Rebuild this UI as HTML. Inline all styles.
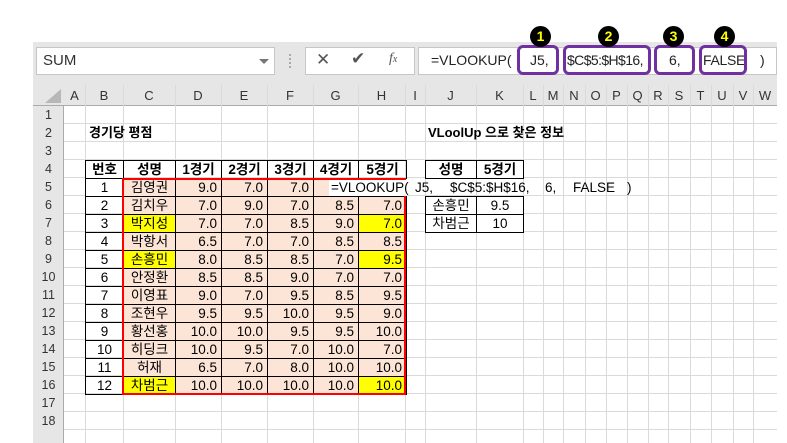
<!DOCTYPE html>
<html><head><meta charset="utf-8"><style>
*{margin:0;padding:0;box-sizing:border-box}
body{width:787px;height:443px;overflow:hidden;background:#fff;position:relative;font-family:"Liberation Sans","Noto Sans CJK KR",sans-serif;color:#000}
.a{position:absolute}
.vl{position:absolute;top:85px;height:358px;width:1px;background:#dadada}
.ch{position:absolute;top:85px;height:21px;font-size:13px;color:#333;text-align:center;line-height:21px}
.rh{position:absolute;left:33px;width:31px;height:18px;font-size:12.5px;color:#333;text-align:center;line-height:18px}
table{border-collapse:collapse;table-layout:fixed;position:absolute}
td{border:1px solid #000;height:18px;font-size:13.5px;padding:0 4px;line-height:16px;white-space:nowrap}
.n{text-align:right}.c{text-align:center}
.p{background:#fce4d6}.y{background:#ffff00}
.b{font-weight:bold}
.box{position:absolute;top:45px;height:30px;border:3px solid #7030a0;border-radius:6px}
.cir{position:absolute;top:26px;width:21px;height:21px;border-radius:50%;background:#000;color:#ffff00;font-weight:bold;font-size:14px;text-align:center;line-height:21px}
.fx{position:absolute;top:52px;font-size:14px;color:#222;white-space:pre}
</style></head><body>
<!-- toolbar -->
<div class="a" style="left:33px;top:42px;width:744px;height:43px;background:#e6e6e6"></div>
<div class="a" style="left:36px;top:47px;width:239px;height:28px;background:#fff;border:1px solid #c6c6c6;font-size:15px;line-height:26px;padding-left:6px;color:#333">SUM</div>
<div class="a" style="left:259px;top:59px;width:0;height:0;border-left:5px solid transparent;border-right:5px solid transparent;border-top:5px solid #777"></div>
<div class="a" style="left:289px;top:54px;width:2px;height:14px;border-left:2px dotted #aaa"></div>
<div class="a" style="left:305px;top:47px;width:110px;height:28px;background:#fff;border:1px solid #c6c6c6"></div>
<div class="a" style="left:316px;top:50px;font-size:17px;color:#555">✕</div>
<div class="a" style="left:351px;top:49px;font-size:17px;color:#555">✔</div>
<div class="a" style="left:389px;top:51px;font-size:14px;font-style:italic;font-family:'Liberation Serif',serif;color:#555">f<span style="font-size:10px">x</span></div>
<div class="a" style="left:418px;top:47px;width:359px;height:28px;background:#fff;border:1px solid #c6c6c6"></div>
<div class="fx" style="left:431px">=VLOOKUP(</div>
<div class="fx" style="left:530px">J5,</div>
<div class="fx" style="left:567px;letter-spacing:-0.6px">$C$5:$H$16,</div>
<div class="fx" style="left:669px">6,</div>
<div class="fx" style="left:703px;letter-spacing:-0.3px">FALSE</div>
<div class="fx" style="left:760px">)</div>
<div class="box" style="left:517px;width:42px"></div>
<div class="box" style="left:563px;width:88px"></div>
<div class="box" style="left:654px;width:41px"></div>
<div class="box" style="left:699px;width:48px"></div>
<div class="cir" style="left:530px">1</div>
<div class="cir" style="left:598px">2</div>
<div class="cir" style="left:663px">3</div>
<div class="cir" style="left:714px">4</div>
<!-- headers -->
<div class="a" style="left:33px;top:85px;width:744px;height:21px;background:#e6e6e6;border-bottom:1px solid #ababab"></div>
<div class="a" style="left:33px;top:106px;width:31px;height:337px;background:#e6e6e6;border-right:1px solid #ababab"></div>
<div class="a" style="left:45px;top:89px;width:0;height:0;border-left:16px solid transparent;border-bottom:14px solid #b7b7b7"></div>
<div class="a" style="left:64px;top:106px;width:713px;height:337px;background:repeating-linear-gradient(to bottom,transparent 0,transparent 17px,#dadada 17px,#dadada 18px)"></div>
<div class="vl" style="left:85px"></div><div class="vl" style="left:123px"></div><div class="vl" style="left:175px"></div><div class="vl" style="left:221px"></div><div class="vl" style="left:267px"></div><div class="vl" style="left:313px"></div><div class="vl" style="left:358px"></div><div class="vl" style="left:405px"></div><div class="vl" style="left:425px"></div><div class="vl" style="left:476px"></div><div class="vl" style="left:523px"></div><div class="vl" style="left:543px"></div><div class="vl" style="left:563px"></div><div class="vl" style="left:585px"></div><div class="vl" style="left:606px"></div><div class="vl" style="left:627px"></div><div class="vl" style="left:648px"></div><div class="vl" style="left:668px"></div><div class="vl" style="left:690px"></div><div class="vl" style="left:711px"></div><div class="vl" style="left:733px"></div><div class="vl" style="left:753px"></div><div class="vl" style="left:777px;background:#fff;width:10px"></div>
<div class="ch" style="left:64px;width:21px">A</div><div class="ch" style="left:85px;width:38px">B</div><div class="ch" style="left:123px;width:52px">C</div><div class="ch" style="left:175px;width:46px">D</div><div class="ch" style="left:221px;width:46px">E</div><div class="ch" style="left:267px;width:46px">F</div><div class="ch" style="left:313px;width:45px">G</div><div class="ch" style="left:358px;width:47px">H</div><div class="ch" style="left:405px;width:20px">I</div><div class="ch" style="left:425px;width:51px">J</div><div class="ch" style="left:476px;width:47px">K</div><div class="ch" style="left:523px;width:20px">L</div><div class="ch" style="left:543px;width:20px">M</div><div class="ch" style="left:563px;width:22px">N</div><div class="ch" style="left:585px;width:21px">O</div><div class="ch" style="left:606px;width:21px">P</div><div class="ch" style="left:627px;width:21px">Q</div><div class="ch" style="left:648px;width:20px">R</div><div class="ch" style="left:668px;width:22px">S</div><div class="ch" style="left:690px;width:21px">T</div><div class="ch" style="left:711px;width:22px">U</div><div class="ch" style="left:733px;width:20px">V</div><div class="ch" style="left:753px;width:24px">W</div>
<div class="rh" style="top:106px">1</div><div class="rh" style="top:124px">2</div><div class="rh" style="top:142px">3</div><div class="rh" style="top:160px">4</div><div class="rh" style="top:178px">5</div><div class="rh" style="top:196px">6</div><div class="rh" style="top:214px">7</div><div class="rh" style="top:232px">8</div><div class="rh" style="top:250px">9</div><div class="rh" style="top:268px">10</div><div class="rh" style="top:286px">11</div><div class="rh" style="top:304px">12</div><div class="rh" style="top:322px">13</div><div class="rh" style="top:340px">14</div><div class="rh" style="top:358px">15</div><div class="rh" style="top:376px">16</div><div class="rh" style="top:394px">17</div><div class="rh" style="top:412px">18</div>
<div class="a b" style="left:89px;top:124px;font-size:13px;line-height:18px">경기당 평점</div>
<div class="a b" style="left:428px;top:124px;font-size:13px;line-height:18px">VLoolUp 으로 찾은 정보</div>
<!-- main table -->
<table style="left:85px;top:160px;width:321px">
<col style="width:38px"><col style="width:52px"><col style="width:46px"><col style="width:46px"><col style="width:46px"><col style="width:45px"><col style="width:48px">
<tr class="b"><td class="c" style="background:#fff">번호</td><td class="c">성명</td><td class="c">1경기</td><td class="c">2경기</td><td class="c">3경기</td><td class="c">4경기</td><td class="c">5경기</td></tr>
<tr><td class="c" style="background:#fff">1</td><td class="c p">김영권</td><td class="n p">9.0</td><td class="n p">7.0</td><td class="n p">7.0</td><td class="p" style="border-right:none"></td><td style="border:none;background:#fff"></td></tr>
<tr><td class="c">2</td><td class="c p">김치우</td><td class="n p">7.0</td><td class="n p">9.0</td><td class="n p">7.0</td><td class="n p">8.5</td><td class="n p">7.0</td></tr>
<tr><td class="c">3</td><td class="c y">박지성</td><td class="n p">7.0</td><td class="n p">7.0</td><td class="n p">8.5</td><td class="n p">9.0</td><td class="n y">7.0</td></tr>
<tr><td class="c">4</td><td class="c p">박항서</td><td class="n p">6.5</td><td class="n p">7.0</td><td class="n p">7.0</td><td class="n p">8.5</td><td class="n p">8.5</td></tr>
<tr><td class="c">5</td><td class="c y">손흥민</td><td class="n p">8.0</td><td class="n p">8.5</td><td class="n p">8.5</td><td class="n p">7.0</td><td class="n y">9.5</td></tr>
<tr><td class="c">6</td><td class="c p">안정환</td><td class="n p">8.5</td><td class="n p">8.5</td><td class="n p">9.0</td><td class="n p">7.0</td><td class="n p">7.0</td></tr>
<tr><td class="c">7</td><td class="c p">이영표</td><td class="n p">9.0</td><td class="n p">7.0</td><td class="n p">9.5</td><td class="n p">8.5</td><td class="n p">9.5</td></tr>
<tr><td class="c">8</td><td class="c p">조현우</td><td class="n p">9.5</td><td class="n p">9.5</td><td class="n p">10.0</td><td class="n p">9.5</td><td class="n p">9.0</td></tr>
<tr><td class="c">9</td><td class="c p">황선홍</td><td class="n p">10.0</td><td class="n p">10.0</td><td class="n p">9.5</td><td class="n p">9.5</td><td class="n p">10.0</td></tr>
<tr><td class="c">10</td><td class="c p">히딩크</td><td class="n p">10.0</td><td class="n p">9.5</td><td class="n p">7.0</td><td class="n p">10.0</td><td class="n p">7.0</td></tr>
<tr><td class="c">11</td><td class="c p">허재</td><td class="n p">6.5</td><td class="n p">7.0</td><td class="n p">8.0</td><td class="n p">10.0</td><td class="n p">10.0</td></tr>
<tr><td class="c">12</td><td class="c y">차범근</td><td class="n p">10.0</td><td class="n p">10.0</td><td class="n p">10.0</td><td class="n p">10.0</td><td class="n y">10.0</td></tr>
</table>
<!-- red borders -->
<div class="a" style="left:122px;top:178px;width:284px;height:2px;background:#ff0000"></div>
<div class="a" style="left:122px;top:178px;width:2px;height:217px;background:#ff0000"></div>
<div class="a" style="left:122px;top:393px;width:284px;height:2px;background:#ff0000"></div>
<div class="a" style="left:404px;top:196px;width:2px;height:199px;background:#ff0000"></div>
<!-- row5 formula overlay -->
<div class="a" style="left:329px;top:180px;width:76px;height:16px;background:#fff"></div>
<div class="a" style="left:331px;top:179px;font-size:13.5px;line-height:18px;white-space:nowrap">=VLOOKUP(</div>
<div class="a" style="left:415px;top:179px;font-size:13.5px;line-height:18px">J5,</div>
<div class="a" style="left:450px;top:179px;font-size:13.5px;line-height:18px">$C$5:$H$16,</div>
<div class="a" style="left:545px;top:179px;font-size:13.5px;line-height:18px">6,</div>
<div class="a" style="left:573px;top:179px;font-size:13.5px;line-height:18px">FALSE</div>
<div class="a" style="left:627px;top:179px;font-size:13.5px;line-height:18px">)</div>
<!-- right table -->
<table style="left:425px;top:160px;width:98px;background:#fff">
<col style="width:51px"><col style="width:47px">
<tr class="b"><td class="c">성명</td><td class="c">5경기</td></tr></table>
<table style="left:425px;top:196px;width:98px;background:#fff">
<col style="width:51px"><col style="width:47px">
<tr><td class="c">손흥민</td><td class="c">9.5</td></tr>
<tr><td class="c">차범근</td><td class="c">10</td></tr></table>
</body></html>
